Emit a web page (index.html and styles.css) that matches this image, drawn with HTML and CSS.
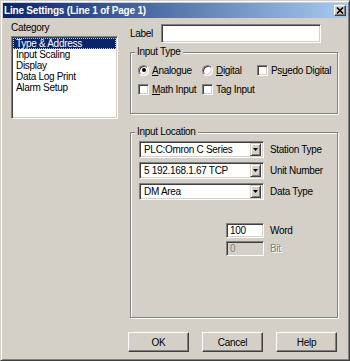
FILE: index.html
```html
<!DOCTYPE html>
<html>
<head>
<meta charset="utf-8">
<link rel="stylesheet" href="styles.css">
</head>
<body>
<div class="window">
  <div class="titlebar">
    <span class="title">Line Settings (Line 1 of Page 1)</span>
    <span class="close"><svg width="8" height="7" viewBox="0 0 8 7"><path d="M1 0.5 L7 6.5 M7 0.5 L1 6.5" stroke="#000" stroke-width="1.6"/></svg></span>
  </div>
  <div class="client">
    <div class="left">
      <div class="cat-label">Category</div>
      <div class="list sunken">
        <div class="item selected">Type &amp; Address</div>
        <div class="item">Input Scaling</div>
        <div class="item">Display</div>
        <div class="item">Data Log Print</div>
        <div class="item">Alarm Setup</div>
      </div>
    </div>
    <div class="right">
      <div class="label-row">
        <span class="lbl">Label</span>
        <div class="label-box sunken"></div>
      </div>
      <fieldset class="group type-group">
        <legend>Input Type</legend>
        <div class="opts">
          <div class="opt"><span class="radio on"></span><span><u>A</u>nalogue</span></div>
          <div class="opt"><span class="radio"></span><span><u>D</u>igital</span></div>
          <div class="opt"><span class="check"></span><span>Ps<u>u</u>edo Digital</span></div>
          <div class="opt"><span class="check"></span><span><u>M</u>ath Input</span></div>
          <div class="opt"><span class="check"></span><span>Tag Input</span></div>
        </div>
      </fieldset>
      <fieldset class="group loc-group">
        <legend>Input Location</legend>
        <div class="loc-grid">
          <div class="combo sunken"><span class="combo-text">PLC:Omron C Series</span><span class="drop"><svg width="5" height="3" viewBox="0 0 5 3"><path d="M0 0 H5 L2.5 3 Z" fill="#000"/></svg></span></div>
          <span>Station Type</span>
          <div class="combo sunken"><span class="combo-text">5 192.168.1.67 TCP</span><span class="drop"><svg width="5" height="3" viewBox="0 0 5 3"><path d="M0 0 H5 L2.5 3 Z" fill="#000"/></svg></span></div>
          <span>Unit Number</span>
          <div class="combo sunken"><span class="combo-text">DM Area</span><span class="drop"><svg width="5" height="3" viewBox="0 0 5 3"><path d="M0 0 H5 L2.5 3 Z" fill="#000"/></svg></span></div>
          <span>Data Type</span>
        </div>
        <div class="num-grid">
          <div class="num sunken">100</div>
          <span>Word</span>
          <div class="num sunken disabled">0</div>
          <span class="dis">Bit</span>
        </div>
      </fieldset>
      <div class="buttons">
        <div class="btn">OK</div>
        <div class="btn">Cancel</div>
        <div class="btn">Help</div>
      </div>
    </div>
  </div>
</div>
</body>
</html>
```

FILE: styles.css
```css
* { box-sizing: border-box; }
html, body {
  margin: 0;
  padding: 0;
  background: #D4D0C8;
  overflow: hidden;
}
body {
  font-family: "Liberation Sans", Arial, sans-serif;
  font-size: 10px;
  letter-spacing: -0.3px;
  color: #000;
}
.window {
  width: 350px;
  height: 361px;
  background: #D4D0C8;
  border: 1px solid;
  border-color: #D4D0C8 #404040 #404040 #D4D0C8;
  box-shadow: inset 1px 1px 0 #fff, inset -1px -1px 0 #808080;
  padding: 2px;
}
.titlebar {
  height: 15px;
  background: linear-gradient(to right, #0A246A, #A6CAF0);
  display: flex;
  align-items: center;
  justify-content: space-between;
}
.title {
  color: #fff;
  font-weight: bold;
  letter-spacing: -0.2px;
  padding-left: 1px;
  line-height: 15px;
}
.close {
  width: 12px;
  height: 11px;
  margin-right: 1px;
  background: #D4D0C8;
  border: 1px solid;
  border-color: #fff #404040 #404040 #fff;
  box-shadow: inset -1px -1px 0 #808080;
  display: flex;
  align-items: center;
  justify-content: center;
}
.close svg { display: block; }
.client {
  display: flex;
  align-items: flex-start;
  gap: 12px;
  padding: 4px 0 0 8px;
}
.sunken {
  background: #fff;
  border: 1px solid;
  border-color: #808080 #fff #fff #808080;
  box-shadow: inset 1px 1px 0 #404040, inset -1px -1px 0 #D4D0C8;
}
.left { width: 107px; }
.cat-label { line-height: 12px; }
.list {
  margin-top: 2px;
  height: 83px;
  padding: 1px;
}
.item {
  line-height: 11px;
  height: 11px;
  padding-left: 3px;
  white-space: nowrap;
}
.item.selected {
  background: #0A246A;
  color: #fff;
  outline: 1px dotted #C8C8A0;
  outline-offset: -1px;
}
.right {
  width: 208px;
  margin-top: 2px;
}
.label-row {
  display: flex;
  align-items: center;
  height: 19px;
}
.lbl { width: 31px; }
.label-box {
  width: 160px;
  height: 19px;
}
.group {
  margin: 0;
  border: 1px solid #808080;
  box-shadow: inset 1px 1px 0 #fff, 1px 1px 0 #fff;
  min-width: 0;
}
.group legend {
  padding: 0 2px;
  line-height: 12px;
  background: #D4D0C8;
}
.type-group {
  margin-top: 3px;
  height: 68px;
  padding: 6px 0 0 7px;
}
.type-group legend { margin-left: -3px; }
.opts {
  display: grid;
  grid-template-columns: 64px 55px auto;
  grid-auto-rows: 12px;
  row-gap: 7px;
}
.opt {
  display: flex;
  align-items: center;
  gap: 3px;
  white-space: nowrap;
}
.radio, .check {
  width: 11px;
  height: 11px;
  flex: none;
  background: #fff;
  border: 1px solid;
  border-color: #808080 #fff #fff #808080;
  box-shadow: inset 1px 1px 0 #404040, inset -1px -1px 0 #D4D0C8;
  position: relative;
}
.radio { border-radius: 50%; }
.radio.on::after {
  content: "";
  position: absolute;
  left: 2.5px;
  top: 2.5px;
  width: 4px;
  height: 4px;
  border-radius: 50%;
  background: #000;
}
.loc-group {
  margin-top: 12px;
  height: 192px;
  padding: 3px 0 0 8px;
}
.loc-group legend { margin-left: -4px; }
.loc-grid {
  display: grid;
  grid-template-columns: 125px auto;
  column-gap: 6px;
  row-gap: 4px;
  align-items: center;
}
.combo {
  height: 17px;
  display: flex;
  align-items: center;
  padding: 2px;
}
.combo-text {
  padding-left: 2px;
  white-space: nowrap;
}
.drop {
  margin-left: auto;
  width: 11px;
  height: 13px;
  background: #D4D0C8;
  border: 1px solid;
  border-color: #D4D0C8 #404040 #404040 #D4D0C8;
  box-shadow: inset 1px 1px 0 #fff, inset -1px -1px 0 #808080;
  display: flex;
  align-items: center;
  justify-content: center;
}
.drop svg { display: block; }
.num-grid {
  display: grid;
  grid-template-columns: 125px auto;
  column-gap: 6px;
  row-gap: 3px;
  align-items: center;
  margin-top: 23px;
}
.num {
  justify-self: end;
  width: 38px;
  height: 15px;
  line-height: 13px;
  padding-left: 3px;
}
.num.disabled {
  background: #D4D0C8;
  color: #808080;
}
.dis {
  color: #808080;
  text-shadow: 1px 1px 0 #fff;
}
.buttons {
  display: flex;
  gap: 13px;
  margin-top: 14px;
  margin-left: -2px;
}
.btn {
  width: 61px;
  height: 20px;
  background: #D4D0C8;
  border: 1px solid;
  border-color: #fff #404040 #404040 #fff;
  box-shadow: inset -1px -1px 0 #808080;
  display: flex;
  align-items: center;
  justify-content: center;
}
```
